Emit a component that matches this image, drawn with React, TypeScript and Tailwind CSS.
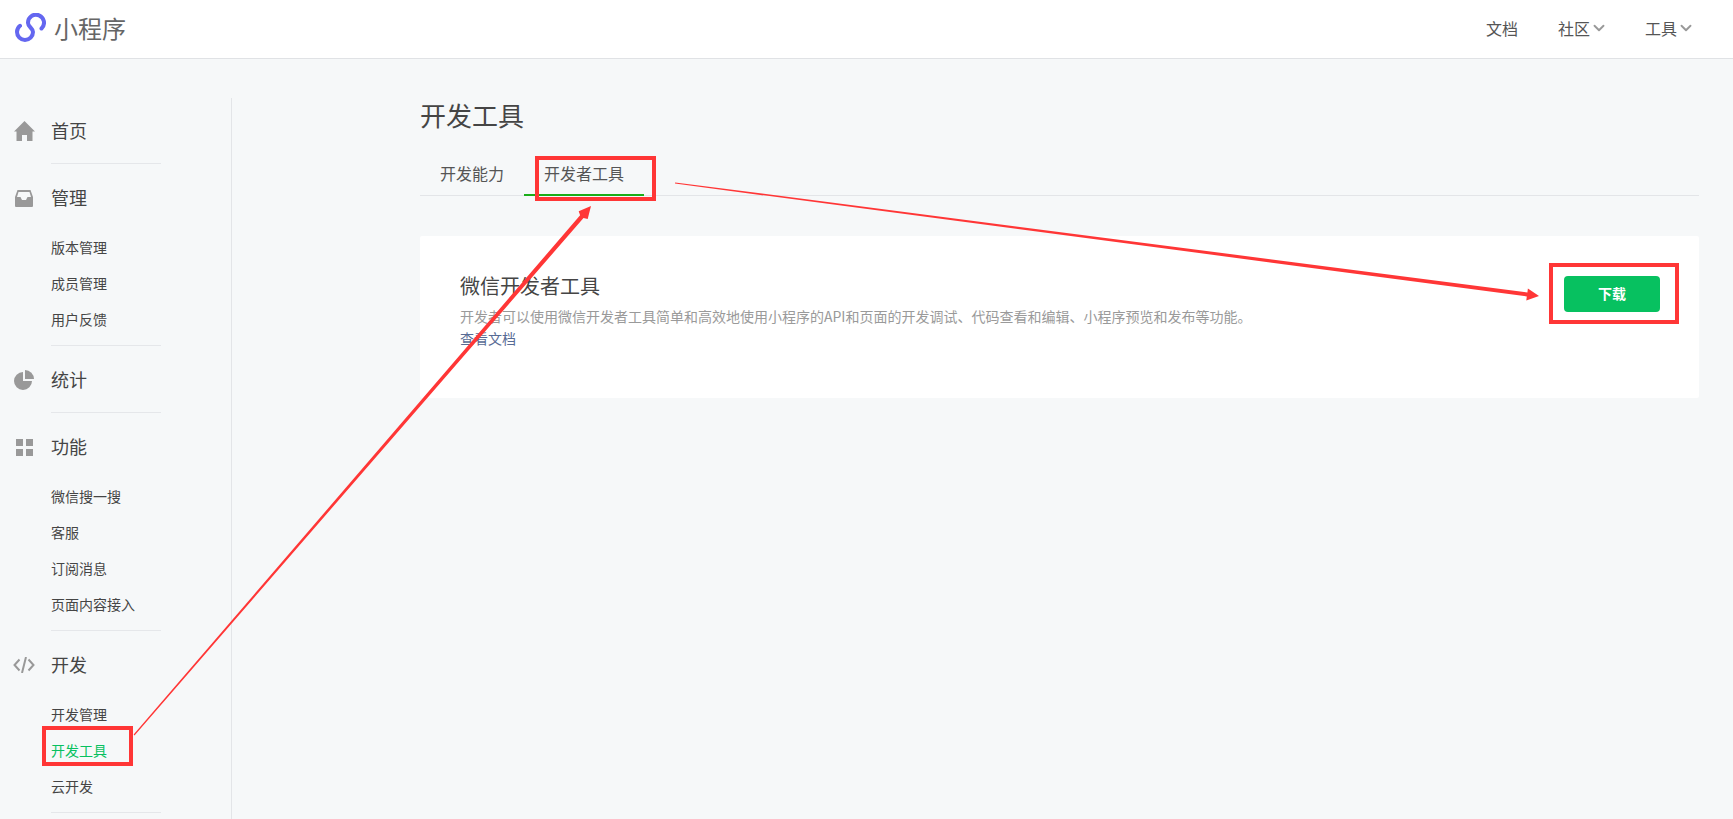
import type { ReactNode } from 'react';
import { ChevronDown } from 'lucide-react';

const font = 'font-["Microsoft_YaHei","Noto_Sans_CJK_SC","Noto_Sans",sans-serif]';

function Logo() {
  return (
    <svg width="31" height="29" viewBox="0 0 31 29" fill="none">
      <path
        d="M26.5 15.500A8 8 0 1 0 13 10c0 4 5 5 5 9a8 8 0 1 1-16 0 8 8 0 0 1 3-6.200"
        stroke="#6467f0"
        strokeWidth="4"
        strokeLinecap="round"
      />
    </svg>
  );
}

function HomeIcon() {
  return (
    <svg width="21" height="20" viewBox="0 0 21 20" fill="#999">
      <path d="M10.500 0 21 10.500h-2.500V20H13v-6H8v6H2.500v-9.500H0z" />
    </svg>
  );
}

function InboxIcon() {
  return (
    <svg width="18" height="17" viewBox="0 0 18 17" fill="#999">
      <path d="M2.500 0h13L18 7v9a1 1 0 0 1-1 1H1a1 1 0 0 1-1-1V7zm1 2L2 7h3.500L7 10h4l1.500-3H16l-1.500-5z" fillRule="evenodd" />
    </svg>
  );
}

function PieIcon() {
  return (
    <svg width="20" height="20" viewBox="0 0 20 20" fill="#999">
      <path d="M9 2v9h9a9 9 0 1 1-9-9z" />
      <path d="M11 0a9 9 0 0 1 9 9h-9z" />
    </svg>
  );
}

function GridIcon() {
  return (
    <svg width="17" height="17" viewBox="0 0 17 17" fill="#999">
      <rect width="7" height="7" />
      <rect x="10" width="7" height="7" />
      <rect y="10" width="7" height="7" />
      <rect x="10" y="10" width="7" height="7" />
    </svg>
  );
}

function CodeIcon() {
  return (
    <svg width="22" height="16" viewBox="0 0 22 16" fill="none" stroke="#999" strokeWidth="2">
      <path d="M6.500 2.500 1.500 8l5 5.500M15.500 2.500l5 5.500-5 5.500M13 0 9 16" />
    </svg>
  );
}

type Section = {
  title: string;
  icon: ReactNode;
  items?: string[];
};

const sections: Section[] = [
  { title: '首页', icon: <HomeIcon /> },
  { title: '管理', icon: <InboxIcon />, items: ['版本管理', '成员管理', '用户反馈'] },
  { title: '统计', icon: <PieIcon /> },
  { title: '功能', icon: <GridIcon />, items: ['微信搜一搜', '客服', '订阅消息', '页面内容接入'] },
  { title: '开发', icon: <CodeIcon />, items: ['开发管理', '开发工具', '云开发'] },
];

function Sidebar() {
  return (
    <aside className="mt-[39px] w-[232px] shrink-0 border-r border-[#e3e5e8] pt-[15px]">
      {sections.map((s) => (
        <div key={s.title}>
          <div className="flex h-[36px] items-center">
            <div className="flex w-[51px] justify-center pr-[3px]">{s.icon}</div>
            <span className="pb-[1px] text-[18px] text-[#454545]">{s.title}</span>
          </div>
          {s.items && (
            <ul className="mt-[13px] flex flex-col pb-[8px]">
              {s.items.map((it) => (
                <li
                  key={it}
                  className={`ml-[51px] flex h-[36px] items-center text-[14px] ${it === '开发工具' ? 'text-[#07c160]' : 'text-[#454545]'}`}
                >
                  {it}
                </li>
              ))}
            </ul>
          )}
          <div className={`ml-[51px] mr-[70px] mb-[16px] h-px bg-[#e5e7ea] ${s.items ? '' : 'mt-[14px]'}`} />
        </div>
      ))}
    </aside>
  );
}

function Annotations() {
  return (
    <svg className="pointer-events-none absolute inset-0" width="1733" height="819" viewBox="0 0 1733 819" fill="none">
      <rect x="44" y="728" width="87" height="36" stroke="#ff3636" strokeWidth="4" />
      <rect x="537" y="158" width="117" height="41" stroke="#ff3636" strokeWidth="4" />
      <rect x="1551" y="265" width="126" height="57" stroke="#ff3636" strokeWidth="4" />
      <path d="M134.500 735.400 L583.5 218 L587.7 219 L591 206 L578.7 211.200 L580.100 215.200 L133.600 734.600 Z" fill="#ff3636" />
      <path d="M675 183.600 L1526.800 296.400 L1526.300 300.400 L1539 296 L1527.900 288.400 L1527.400 292.400 L675.100 182.400 Z" fill="#ff3636" />
    </svg>
  );
}

export default function App() {
  return (
    <div className={`relative flex h-[819px] flex-col overflow-hidden bg-[#f6f8f9] ${font}`}>
      <header className="flex h-[59px] shrink-0 items-center justify-between border-b border-[#e0e2e5] bg-white pb-[3px] pl-[15px] pr-[38px]">
        <div className="flex items-center gap-[8px]">
          <Logo />
          <span className="text-[24px] text-[#666]">小程序</span>
        </div>
        <nav className="flex items-center text-[16px] text-[#555]">
          <span className="mr-[40px]">文档</span>
          <span className="mr-[37px] flex items-center">社区<ChevronDown size={18} strokeWidth={2.5} className="text-[#999]" /></span>
          <span className="flex items-center">工具<ChevronDown size={18} strokeWidth={2.5} className="text-[#999]" /></span>
        </nav>
      </header>
      <div className="flex min-h-0 flex-1">
        <Sidebar />
        <main className="flex-1 pl-[188px] pr-[34px] pt-[38px]">
          <h1 className="text-[26px] leading-[36px] font-normal text-[#454545]">开发工具</h1>
          <div className="mt-[21px] flex h-[42px] border-b border-[#e3e5e8] text-[16px] text-[#555]">
            <div className="flex h-full w-[104px] items-center pb-[3px] pl-[20px]">开发能力</div>
            <div className="flex h-[42px] w-[120px] items-center border-b-2 border-[#1aad19] pb-[3px] pl-[20px]">开发者工具</div>
          </div>
          <section className="mt-[40px] flex h-[162px] items-start justify-between rounded-[2px] bg-white pl-[40px] pr-[39px] pt-[36px]">
            <div>
              <h2 className="text-[20px] leading-[28px] font-normal text-[#454545]">微信开发者工具</h2>
              <p className="mt-[5px] text-[14px] leading-[22px] text-[#9a9a9a]">
                开发者可以使用微信开发者工具简单和高效地使用小程序的API和页面的开发调试、代码查看和编辑、小程序预览和发布等功能。
              </p>
              <a className="block text-[14px] leading-[22px] text-[#576b95]">查看文档</a>
            </div>
            <button className="mt-[4px] h-[36px] w-[96px] rounded-[4px] bg-[#07c160] pb-[1px] text-[14px] font-bold text-white">下载</button>
          </section>
        </main>
      </div>
      <Annotations />
    </div>
  );
}
